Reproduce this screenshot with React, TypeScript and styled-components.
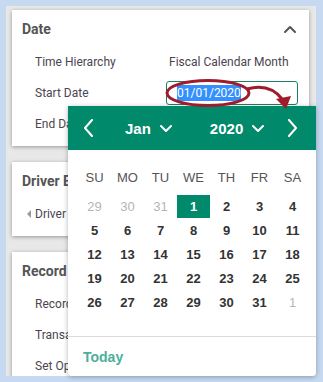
import React from 'react'
import styled, { createGlobalStyle } from 'styled-components'

const GlobalStyle = createGlobalStyle`
    body{
        margin:0;
        font-family:Roboto, "Liberation Sans", sans-serif;
    }
`;

const weeks = [
    [29,30,31,1,2,3,4],
    [5,6,7,8,9,10,11],
    [12,13,14,15,16,17,18],
    [19,20,21,22,23,24,25],
    [26,27,28,29,30,31,1],
]
const dayNames = ['SU','MO','TU','WE','TH','FR','SA']

const Chevron = ({dir,color='#fff'}:{dir:'up'|'down'|'left'|'right',color?:string}) => {
    const paths:any = {
        up:'M1 7 L6 2 L11 7',
        down:'M1 2 L6 7 L11 2',
        left:'M9 1 L2 9 L9 17',
        right:'M2 1 L9 9 L2 17',
    }
    const horiz = dir==='left'||dir==='right'
    return (
        <svg width={horiz?11:12} height={horiz?18:9} viewBox={horiz?'0 0 11 18':'0 0 12 9'}>
            <path d={paths[dir]} fill='none' stroke={color} strokeWidth={2} strokeLinecap='round' strokeLinejoin='round'/>
        </svg>
    )
}

const App = () => {
    return (
        <Page>
            <GlobalStyle/>
            <Panel>
                <Card>
                    <CardHeader>
                        <span>Date</span>
                        <Chevron dir='up' color='#555'/>
                    </CardHeader>
                    <Row>
                        <Label>Time Hierarchy</Label>
                        <Value>Fiscal Calendar Month</Value>
                    </Row>
                    <Row>
                        <Label>Start Date</Label>
                        <DateInput><Selected>01/01/2020</Selected></DateInput>
                    </Row>
                    <Row>
                        <Label>End Date</Label>
                    </Row>
                </Card>
                <Card>
                    <CardHeader><span>Driver Based</span></CardHeader>
                    <Row $indent={15}>
                        <Caret/>
                        <Label>Driver</Label>
                    </Row>
                </Card>
                <Card>
                    <CardHeader><span>Record</span></CardHeader>
                    <Row><Label>Record</Label></Row>
                    <Row><Label>Transaction</Label></Row>
                    <Row><Label>Set Options</Label></Row>
                </Card>
            </Panel>

            <Popup>
                <CalHeader>
                    <NavBtn><Chevron dir='left'/></NavBtn>
                    <Picker $left={31}>Jan <Chevron dir='down'/></Picker>
                    <Picker $left={38}>2020 <Chevron dir='down'/></Picker>
                    <NavBtn $push><Chevron dir='right'/></NavBtn>
                </CalHeader>
                <CalBody>
                    <Grid>
                        {dayNames.map(d=><DayName key={d}>{d}</DayName>)}
                    </Grid>
                    <Grid $top={6}>
                        {weeks.map((w,wi)=>w.map((n,i)=>{
                            const outside = (wi===0&&n>20)||(wi===4&&n<7)
                            return <Day key={wi+'-'+i} $outside={outside} $selected={wi===0&&n===1}>{n}</Day>
                        }))}
                    </Grid>
                </CalBody>
                <CalFooter>Today</CalFooter>
            </Popup>

            <Annotation width={323} height={382}>
                <ellipse cx={208} cy={93} rx={41} ry={12.5} fill='none' stroke='#9f1c2a' strokeWidth={3}/>
                <path d='M247 89 C258 86 272 86 282 99' fill='none' stroke='#9f1c2a' strokeWidth={3}/>
                <polygon points='276,99 291,96 286,109' fill='#9f1c2a'/>
            </Annotation>
        </Page>
    )
}

export default App;

const Page=styled.div`
    position:relative;
    width:323px;
    height:382px;
    box-sizing:border-box;
    padding:6px 7px 6px 6px;
    background:#c6d9f0;
    overflow:hidden;
`;

const Panel=styled.div`
    height:100%;
    box-sizing:border-box;
    padding:4px 7px 0 6px;
    background:#e8e8e8;
    display:flex;
    flex-direction:column;
    gap:16px;
    overflow:hidden;
`;

const Card=styled.div`
    background:#fff;
    box-shadow:0 1px 4px rgba(0,0,0,0.35);
    padding-bottom:7px;
    flex-shrink:0;
`;

const CardHeader=styled.div`
    height:36px;
    display:flex;
    align-items:center;
    justify-content:space-between;
    padding:2px 13px 0 10px;
    box-sizing:border-box;
    font-size:14px;
    font-weight:700;
    color:#555;
    white-space:nowrap;
`;

const Row=styled.div<{$indent?:number}>`
    height:31px;
    display:flex;
    align-items:center;
    padding-left:${(p)=>p.$indent ?? 23}px;
    font-size:12px;
    color:#4b4550;
    white-space:nowrap;
`;

const Label=styled.span`
    width:131px;
    flex-shrink:0;
`;

const Value=styled.span`
    padding-left:3px;
`;

const Caret=styled.span`
    width:0;
    height:0;
    border-top:4px solid transparent;
    border-bottom:4px solid transparent;
    border-right:4px solid #999;
    margin-right:4px;
`;

const DateInput=styled.div`
    width:132px;
    height:24px;
    box-sizing:border-box;
    border:1px solid #1f7f5f;
    border-radius:3px;
    padding-left:10px;
    display:flex;
    align-items:center;
    font-size:12px;
`;

const Selected=styled.span`
    background:#3390ff;
    color:#fff;
    line-height:16px;
`;

const Popup=styled.div`
    position:absolute;
    left:68px;
    top:106px;
    width:248px;
    height:270px;
    background:#fff;
    border-radius:0 0 4px 4px;
    box-shadow:0 1px 5px rgba(0,0,0,0.3);
    display:flex;
    flex-direction:column;
    font-family:"Liberation Sans", Arial, sans-serif;
    overflow:hidden;
`;

const CalHeader=styled.div`
    height:44px;
    background:#00896b;
    display:flex;
    align-items:center;
    padding:0 18px 0 15px;
    color:#fff;
    font-weight:700;
    font-size:15px;
`;

const NavBtn=styled.div<{$push?:boolean}>`
    width:11px;
    display:flex;
    align-items:center;
    margin-left:${(p)=>p.$push?'auto':'0'};
`;

const Picker=styled.div<{$left:number}>`
    margin-left:${(p)=>p.$left}px;
    display:flex;
    align-items:center;
    gap:9px;
`;

const CalBody=styled.div`
    padding:15px 7px 21px 10px;
    border-bottom:1px solid #dcdcdc;
`;

const Grid=styled.div<{$top?:number}>`
    display:grid;
    grid-template-columns:repeat(7,33px);
    grid-auto-rows:24px;
    margin-top:${(p)=>p.$top ?? 0}px;
`;

const DayName=styled.div`
    display:flex;
    align-items:center;
    justify-content:center;
    font-size:13px;
    color:#555;
`;

const Day=styled.div<{$outside?:boolean,$selected?:boolean}>`
    display:flex;
    align-items:center;
    justify-content:center;
    font-size:13px;
    font-weight:${(p)=>p.$outside?400:700};
    color:${(p)=>p.$selected?'#fff':p.$outside?'#b5b5b5':'#333'};
    background:${(p)=>p.$selected?'#00896b':'transparent'};
    height:23px;
`;

const CalFooter=styled.div`
    flex:1;
    display:flex;
    align-items:center;
    padding-left:15px;
    font-size:14px;
    font-weight:700;
    color:#4caf9b;
`;

const Annotation=styled.svg`
    position:absolute;
    left:0;
    top:0;
    pointer-events:none;
`;
